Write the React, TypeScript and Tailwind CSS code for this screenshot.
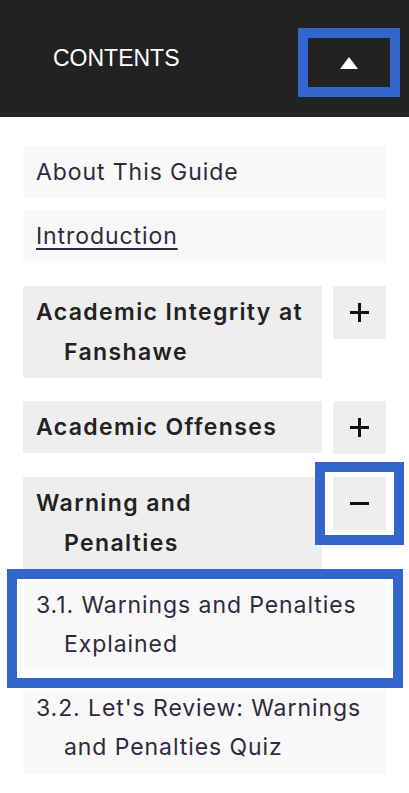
import React from "react";

const body = { fontFamily: "Inter, 'Noto Sans', sans-serif" };

function PlusIcon() {
  return (
    <svg width="19" height="19" viewBox="0 0 19 19">
      <rect x="0" y="8" width="19" height="3" fill="#111" />
      <rect x="8" y="0" width="3" height="19" fill="#111" />
    </svg>
  );
}

function MinusIcon() {
  return (
    <svg width="19" height="3" viewBox="0 0 19 3">
      <rect x="0" y="0" width="19" height="3" fill="#111" />
    </svg>
  );
}

function FocusRing({ className }: { className: string }) {
  return (
    <span
      className={`pointer-events-none absolute border-[10px] border-[#3366cc] ${className}`}
    />
  );
}

function Chapter({
  title,
  open,
  focused,
  className = "",
}: {
  title: React.ReactNode;
  open?: boolean;
  focused?: boolean;
  className?: string;
}) {
  return (
    <div className={`flex items-start gap-[11px] ${className}`}>
      <div className="w-[299px] bg-[#eeeeee] py-[6px] pl-[41px] pr-[4px] -indent-[28px] text-[23px] leading-[40px] font-semibold tracking-[0.06em] text-[#222222]">
        {title}
      </div>
      <button className="relative flex h-[53px] w-[53px] items-center justify-center bg-[#eeeeee]">
        {open ? <MinusIcon /> : <PlusIcon />}
        {focused && (
          <FocusRing className="-left-[18px] -right-[18px] -top-[15px] -bottom-[15px]" />
        )}
      </button>
    </div>
  );
}

export default function App() {
  return (
    <div className="min-h-[793px] w-[409px] bg-white" style={body}>
      {/* Header */}
      <div className="flex h-[117px] items-center justify-between bg-[#222222] pl-[53px] pr-[19px]">
        <span
          className="text-[23px] text-white"
          style={{ fontFamily: "'Liberation Sans', Arial, sans-serif" }}
        >
          CONTENTS
        </span>
        <button className="relative mt-[8px] flex h-[49px] w-[82px] items-center justify-center bg-[#222222]">
          <svg width="18" height="12" viewBox="0 0 18 12">
            <polygon points="9,0 18,12 0,12" fill="#ffffff" />
          </svg>
          <FocusRing className="-inset-[10px]" />
        </button>
      </div>

      {/* List */}
      <div className="px-[23px] pt-[29px] pb-[20px] text-[#2e2b3f]">
        <div className="bg-[#f9f9f9] py-[6px] pl-[13px] text-[23px] leading-[40px] tracking-[0.04em]">
          About This Guide
        </div>
        <div className="mt-[12px] bg-[#f9f9f9] py-[6px] pl-[13px] text-[23px] leading-[41px] tracking-[0.04em]">
          <span className="underline decoration-[2px] underline-offset-[4px]">
            Introduction
          </span>
        </div>

        <Chapter className="mt-[23px]" title="Academic Integrity at Fanshawe" />
        <Chapter className="mt-[23px]" title="Academic Offenses" />
        <Chapter
          className="mt-[23px]"
          title={
            <>
              Warning and
              <br />
              Penalties
            </>
          }
          open
          focused
        />

        <div className="relative mt-[12px] bg-[#f9f9f9] pt-[5px] pb-[7px] pl-[41px] pr-[10px] -indent-[28px] text-[23px] leading-[39px] tracking-[0.04em]">
          3.1. Warnings and Penalties Explained
          <FocusRing className="-left-[16px] -right-[17px] -top-[12px] -bottom-[17px]" />
        </div>
        <div className="mt-[18px] bg-[#f9f9f9] pb-[7px] pl-[41px] pr-[10px] -indent-[28px] text-[23px] leading-[39px] tracking-[0.04em]">
          3.2. Let's Review: Warnings and Penalties Quiz
        </div>
      </div>
    </div>
  );
}
